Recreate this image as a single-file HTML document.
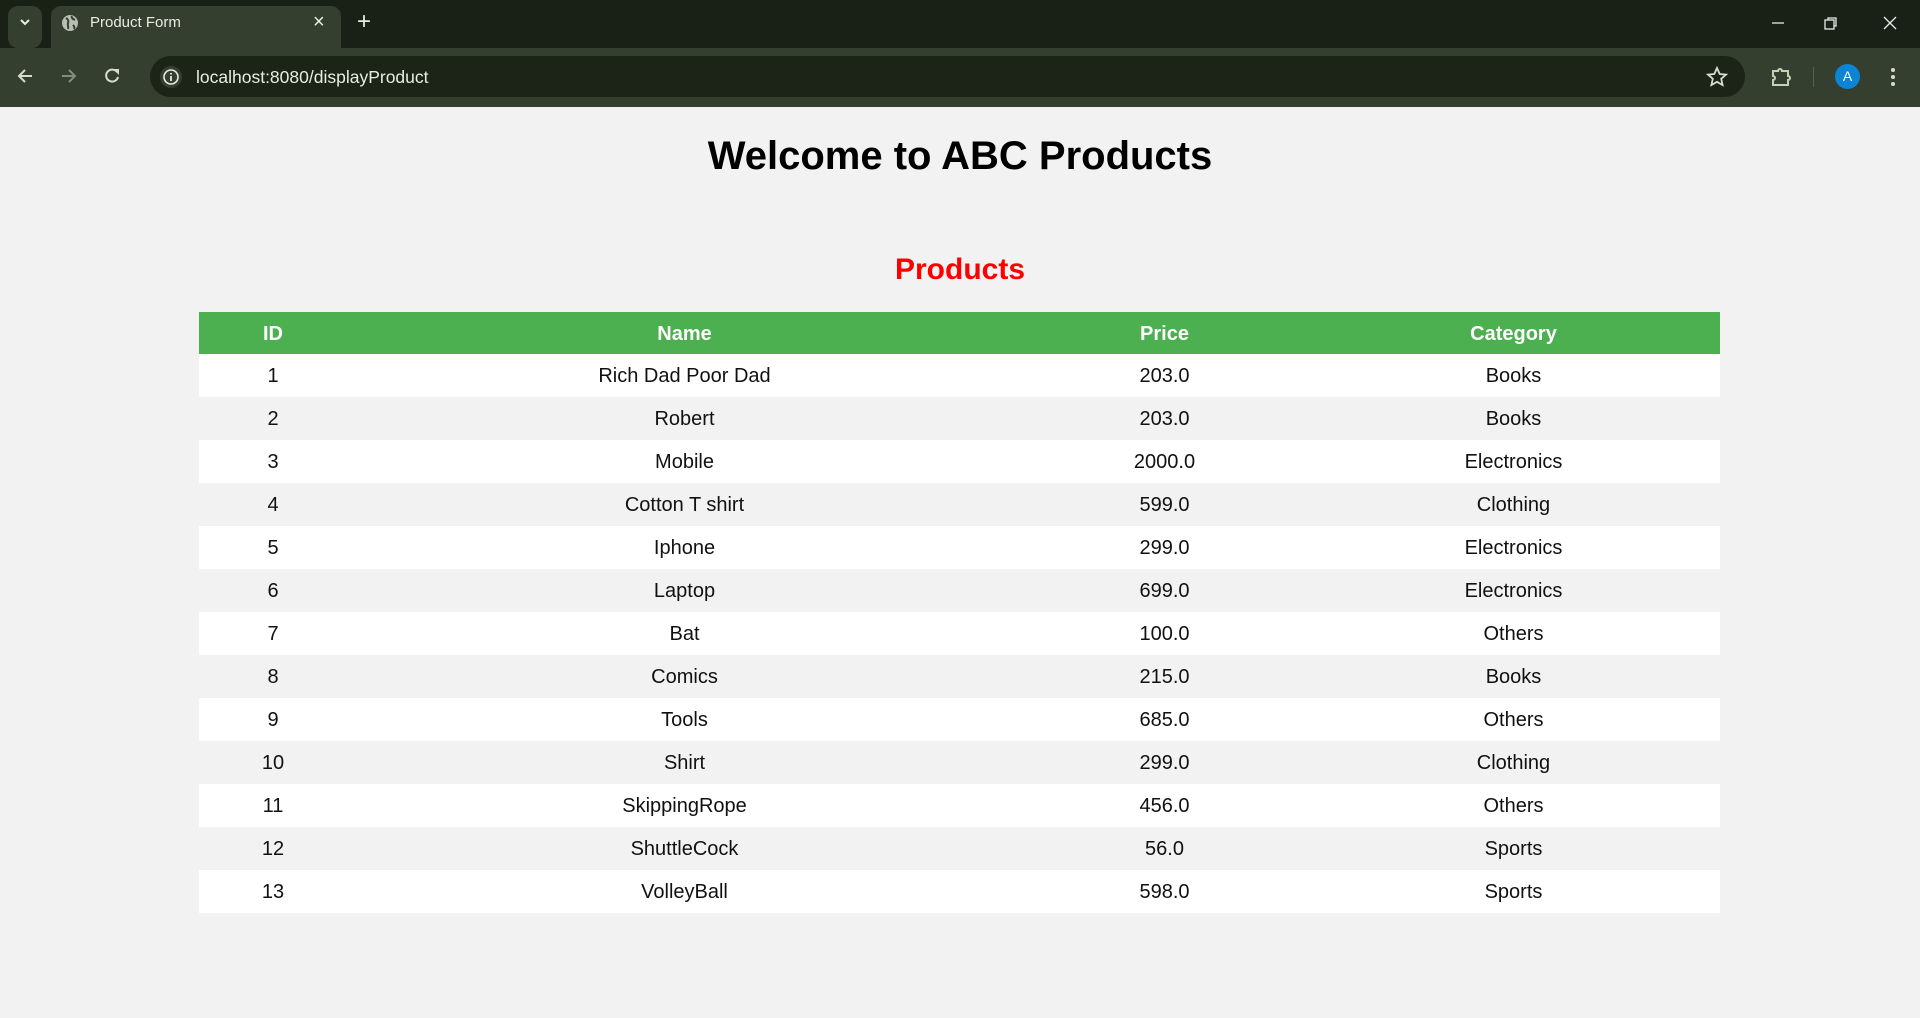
<!DOCTYPE html>
<html><head><meta charset="utf-8"><style>
*{box-sizing:border-box}
html,body{margin:0;padding:0;width:1920px;height:1018px;overflow:hidden;background:#f2f2f2;font-family:"Liberation Sans",Arial,sans-serif}
#top{position:absolute;left:0;top:0;width:1920px;height:48px;background:#192116}
#tb{position:absolute;left:0;top:48px;width:1920px;height:59px;background:#343f30}
.tab{position:absolute;left:51px;top:6px;width:290px;height:43px;background:#343f30;border-radius:10px 10px 0 0}
.dd{position:absolute;left:8px;top:6px;width:34px;height:42px;background:#343f30;border-radius:10px}
.omni{position:absolute;left:150px;top:56px;width:1595px;height:41px;background:#1b2417;border-radius:21px}
.t{position:absolute;color:#e8ece4;white-space:nowrap}
svg{position:absolute}
h1{position:absolute;top:132px;left:0;width:1920px;text-align:center;margin:0;font-size:40px;line-height:48px;color:#000}
h2{position:absolute;top:251px;left:0;width:1920px;text-align:center;margin:0;font-size:30px;line-height:38px;color:#f00}
table{position:absolute;left:199px;top:312px;width:1521px;border-collapse:collapse;table-layout:fixed}
th,td{height:43px;padding:2px 0 0;text-align:center;font-size:20px}
th{background:#4caf50;color:#fff;font-weight:bold;height:42px}
td{color:#111}
tr:nth-child(odd) td{background:#fff}
tr:nth-child(even) td{background:#f2f2f2}
</style></head><body>
<div id="top"></div><div id="tb"></div>
<div class="dd"></div>
<svg style="left:18px;top:17px" width="14" height="12" viewBox="0 0 14 12"><path d="M3 3l4 4 4-4" stroke="#e8ece4" stroke-width="2" fill="none"/></svg>
<div class="tab"></div>
<svg style="left:61px;top:14px" width="18" height="18" viewBox="0 0 18 18"><circle cx="9" cy="9" r="8" fill="#b9bfb5"/><path d="M5 4c2 1 3 3 2 5s1 3 0 6M11 2c-1 2 1 3 3 4M12 11c1 1 2 2 1 4" stroke="#343f30" stroke-width="2" fill="none"/></svg>
<div class="t" style="left:90px;top:14px;font-size:15px">Product Form</div>
<div class="t" style="left:313px;top:11px;font-size:20px">×</div>
<div class="t" style="left:357px;top:8px;font-size:24px">+</div>
<svg style="left:1770px;top:16px" width="140" height="14" viewBox="0 0 140 14"><path d="M2 7h12" stroke="#e8ece4" stroke-width="1.3"/><rect x="55" y="4" width="9" height="9" fill="none" stroke="#e8ece4" stroke-width="1.3"/><path d="M58 4V2h8v8h-2" fill="none" stroke="#e8ece4" stroke-width="1.3"/><path d="M114 1l12 12M126 1l-12 12" stroke="#e8ece4" stroke-width="1.3"/></svg>
<svg style="left:16px;top:66px" width="110" height="20" viewBox="0 0 110 20"><path d="M16 10H3M9 4l-6 6 6 6" stroke="#d7dcd3" stroke-width="2" fill="none"/><path d="M46 10h13M53 4l6 6-6 6" stroke="#858c80" stroke-width="2" fill="none"/><path d="M101 6a6 6 0 1 0 1 5" stroke="#d7dcd3" stroke-width="2" fill="none"/><path d="M97 3h6v6z" fill="#d7dcd3"/></svg>
<div class="omni"></div>
<svg style="left:160px;top:66px" width="22" height="22" viewBox="0 0 22 22"><circle cx="11" cy="11" r="11" fill="#343f30"/><circle cx="11" cy="11" r="7" fill="none" stroke="#e8ece4" stroke-width="1.6"/><path d="M11 10v5M11 7v1.5" stroke="#e8ece4" stroke-width="1.8"/></svg>
<div class="t" style="left:196px;top:67px;font-size:17.5px;color:#e8ece4">localhost:8080/displayProduct</div>
<svg style="left:1705px;top:65px" width="24" height="24" viewBox="0 0 24 24"><path d="M12 3l2.7 6 6.3.6-4.8 4.2 1.4 6.3L12 16.8 6.4 20.1l1.4-6.3L3 9.6l6.3-.6z" fill="none" stroke="#d7dcd3" stroke-width="1.8"/></svg>
<svg style="left:1770px;top:65px" width="24" height="24" viewBox="0 0 24 24"><path d="M3 6h5a2 2 0 0 1 4 0h6v5a2 2 0 0 1 0 4v5H3v-5a2 2 0 0 0 0-4z" fill="none" stroke="#c6d2b8" stroke-width="2"/></svg>
<div style="position:absolute;left:1813px;top:67px;width:1px;height:20px;background:#56604f"></div>
<div style="position:absolute;left:1835px;top:64px;width:25px;height:25px;border-radius:50%;background:#0b84d6;color:#fff;font-size:14px;text-align:center;line-height:25px">A</div>
<svg style="left:1888px;top:66px" width="10" height="22" viewBox="0 0 10 22"><circle cx="5" cy="4" r="2" fill="#d7dcd3"/><circle cx="5" cy="11" r="2" fill="#d7dcd3"/><circle cx="5" cy="18" r="2" fill="#d7dcd3"/></svg>
<h1>Welcome to ABC Products</h1>
<h2>Products</h2>
<table>
<colgroup><col style="width:148px"><col style="width:675px"><col style="width:285px"><col style="width:413px"></colgroup>
<thead><tr><th>ID</th><th>Name</th><th>Price</th><th>Category</th></tr></thead>
<tbody>
<tr><td>1</td><td>Rich Dad Poor Dad</td><td>203.0</td><td>Books</td></tr>
<tr><td>2</td><td>Robert</td><td>203.0</td><td>Books</td></tr>
<tr><td>3</td><td>Mobile</td><td>2000.0</td><td>Electronics</td></tr>
<tr><td>4</td><td>Cotton T shirt</td><td>599.0</td><td>Clothing</td></tr>
<tr><td>5</td><td>Iphone</td><td>299.0</td><td>Electronics</td></tr>
<tr><td>6</td><td>Laptop</td><td>699.0</td><td>Electronics</td></tr>
<tr><td>7</td><td>Bat</td><td>100.0</td><td>Others</td></tr>
<tr><td>8</td><td>Comics</td><td>215.0</td><td>Books</td></tr>
<tr><td>9</td><td>Tools</td><td>685.0</td><td>Others</td></tr>
<tr><td>10</td><td>Shirt</td><td>299.0</td><td>Clothing</td></tr>
<tr><td>11</td><td>SkippingRope</td><td>456.0</td><td>Others</td></tr>
<tr><td>12</td><td>ShuttleCock</td><td>56.0</td><td>Sports</td></tr>
<tr><td>13</td><td>VolleyBall</td><td>598.0</td><td>Sports</td></tr>
</tbody></table>
</body></html>
